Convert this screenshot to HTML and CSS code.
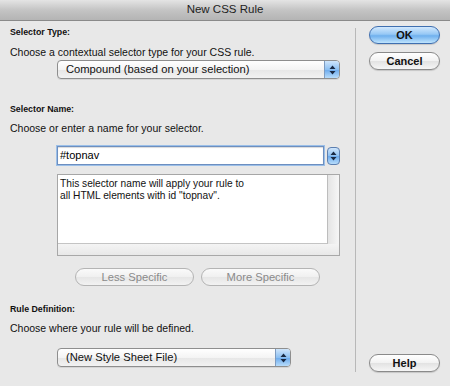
FILE: index.html
```html
<!DOCTYPE html>
<html>
<head>
<meta charset="utf-8">
<link rel="stylesheet" href="styles.css">
</head>
<body>
<div class="window">
  <div class="titlebar">New CSS Rule</div>
  <div class="content">
    <div class="main">
      <div class="label l1">Selector Type:</div>
      <div class="desc">Choose a contextual selector type for your CSS rule.</div>
      <div class="select sel1">
        <span class="sel-text">Compound (based on your selection)</span>
        <span class="arrows"><svg width="7" height="10" viewBox="0 0 7 10"><path d="M3.5 0.5 L6.5 4 H0.5 Z M0.5 6 H6.5 L3.5 9.5 Z" fill="#1a2a44"/></svg></span>
      </div>
      <div class="label l2">Selector Name:</div>
      <div class="desc">Choose or enter a name for your selector.</div>
      <div class="input-row">
        <div class="input">#topnav</div>
        <div class="stepper"><svg width="7" height="10" viewBox="0 0 7 10"><path d="M3.5 0.5 L6.5 4 H0.5 Z M0.5 6 H6.5 L3.5 9.5 Z" fill="#1a2a44"/></svg></div>
      </div>
      <div class="textarea">
        <div class="ta-body">
          <div class="ta-text">This selector name will apply your rule to<br>all HTML elements with id "topnav".</div>
          <div class="vscroll"></div>
        </div>
        <div class="hscroll"></div>
      </div>
      <div class="spec-row">
        <div class="btn disabled">Less Specific</div>
        <div class="btn disabled">More Specific</div>
      </div>
      <div class="label l3">Rule Definition:</div>
      <div class="desc">Choose where your rule will be defined.</div>
      <div class="select sel3">
        <span class="sel-text">(New Style Sheet File)</span>
        <span class="arrows"><svg width="7" height="10" viewBox="0 0 7 10"><path d="M3.5 0.5 L6.5 4 H0.5 Z M0.5 6 H6.5 L3.5 9.5 Z" fill="#1a2a44"/></svg></span>
      </div>
    </div>
    <div class="divider"></div>
    <div class="side">
      <div class="btn primary">OK</div>
      <div class="btn">Cancel</div>
      <div class="spacer"></div>
      <div class="btn">Help</div>
    </div>
  </div>
</div>
</body>
</html>
```
FILE: styles.css
```css
* { box-sizing: border-box; }
html, body { margin: 0; padding: 0; }
body {
  width: 450px;
  height: 386px;
  background: #e8e8e8;
  font-family: "Liberation Sans", Arial, sans-serif;
  color: #000;
  overflow: hidden;
}
.window { width: 450px; height: 386px; display: flex; flex-direction: column; }
.titlebar {
  height: 21px;
  background: linear-gradient(#e4e4e4, #c4c4c4 50%, #b4b4b4);
  border-bottom: 1px solid #8a8a8a;
  text-align: center;
  font-size: 11.5px;
  line-height: 18px;
  color: #222;
}
.content { flex: 1; display: flex; }
.main { width: 355px; padding: 4px 0 0 10px; display: flex; flex-direction: column; }
.label { font-size: 8.8px; font-weight: bold; line-height: 14px; color: #111; }
.desc { font-size: 10.5px; line-height: 14px; margin-top: 6px; color: #111; }
.l2 { margin-top: 23px; }
.l3 { margin-top: 16px; }
.l2 + .desc, .l3 + .desc { margin-top: 5px; }
.select {
  margin-left: 47px;
  height: 19px;
  display: flex;
  align-items: stretch;
  border: 1px solid #8e8e8e;
  border-radius: 4px;
  background: linear-gradient(#ffffff, #f4f4f4 50%, #e6e6e6 51%, #f2f2f2);
  overflow: hidden;
  box-shadow: 0 1px 0 rgba(0,0,0,0.08);
}
.sel1 { width: 283px; margin-top: 1px; }
.sel3 { width: 234px; margin-top: 13px; }
.sel-text { flex: 1; font-size: 11.2px; line-height: 17px; padding-left: 8px; color: #111; }
.arrows, .stepper {
  width: 15px;
  display: flex; align-items: center; justify-content: center;
  background: linear-gradient(#cfe5fb, #8dc0f2 50%, #6aa9ec 51%, #b7dcfb);
  border-left: 1px solid #7d9bc0;
}
.input-row { margin-left: 47px; margin-top: 11px; display: flex; align-items: center; width: 283px; }
.input {
  width: 267px;
  height: 19px;
  background: #fff;
  border: 1px solid #6d8fc0;
  box-shadow: 0 0 0 1px #9bbfe8, inset 0 1px 1px rgba(0,0,0,0.15);
  font-size: 11px;
  line-height: 17px;
  padding-left: 2px;
}
.stepper {
  margin-left: 3px;
  width: 13px; height: 18px;
  border: 1px solid #5c7fb0;
  border-radius: 4px;
}
.textarea {
  margin-left: 47px;
  margin-top: 9px;
  width: 283px;
  height: 82px;
  border: 1px solid #a8a8a8;
  background: #f0f0f0;
  display: flex;
  flex-direction: column;
}
.ta-body { flex: 1; display: flex; }
.ta-text {
  flex: 1;
  background: #fff;
  font-size: 10.2px;
  line-height: 12px;
  padding: 3px 2px;
  color: #111;
  border-right: 1px solid #bdbdbd;
  border-bottom: 1px solid #c4c4c4;
  box-shadow: 1px 1px 2px rgba(0,0,0,0.15);
}
.vscroll { width: 11px; background: linear-gradient(90deg, #e4e4e4, #f6f6f6); }
.hscroll { height: 11px; background: linear-gradient(#f4f4f4, #e8e8e8); }
.spec-row { margin-left: 65px; margin-top: 12px; display: flex; gap: 7px; }
.btn {
  height: 18px;
  border: 1px solid #8a8a8a;
  border-radius: 9px;
  background: linear-gradient(#ffffff, #f2f2f2 50%, #e2e2e2 51%, #f6f6f6);
  font-size: 11.2px;
  line-height: 16px;
  text-align: center;
  color: #111;
  box-shadow: 0 1px 1px rgba(0,0,0,0.15);
}
.spec-row .btn { width: 119px; }
.btn.disabled { color: #8a8a8a; border-color: #b4b4b4; background: linear-gradient(#fafafa, #f0f0f0 50%, #e6e6e6 51%, #f2f2f2); box-shadow: none; }
.divider { width: 1px; background: #b8b8b8; margin: 7px 0 14px 0; }
.side { flex: 1; padding: 5px 10px 0 13px; display: flex; flex-direction: column; }
.side .btn { width: 71px; font-weight: bold; font-size: 11px; }
.side .btn + .btn { margin-top: 8px; }
.side .spacer { flex: 1; }
.side .spacer + .btn { margin-top: 0; margin-bottom: 14px; }
.btn.primary {
  border-color: #3f6fb0;
  background: linear-gradient(#d2e8fd, #96c8f5 45%, #6fb0ee 55%, #bfe4fd);
}
```
